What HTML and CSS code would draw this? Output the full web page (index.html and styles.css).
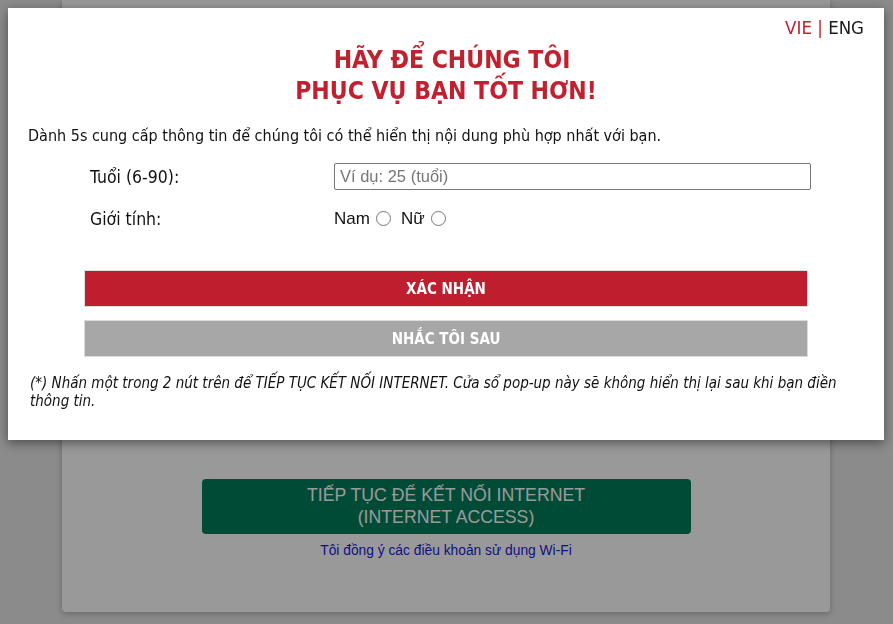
FILE: index.html
```html
<!DOCTYPE html>
<html lang="vi">
<head>
<meta charset="utf-8">
<title>Wi-Fi</title>
<link rel="stylesheet" href="styles.css">
</head>
<body>
<div class="page">
  <div class="card">
    <div class="card-space"></div>
    <a class="go-btn" href="#">TIẾP TỤC ĐỂ KẾT NỐI INTERNET<br>(INTERNET ACCESS)</a>
    <a class="terms" href="#">Tôi đồng ý các điều khoản sử dụng Wi-Fi</a>
  </div>
</div>
<div class="overlay"></div>
<div class="modal">
  <div class="lang"><span class="vie">VIE</span> <span class="sep">|</span> <span class="eng">ENG</span></div>
  <h1 class="title"><span class="t1">HÃY ĐỂ CHÚNG TÔI</span><br>PHỤC VỤ BẠN TỐT HƠN!</h1>
  <p class="intro">Dành 5s cung cấp thông tin để chúng tôi có thể hiển thị nội dung phù hợp nhất với bạn.</p>
  <div class="form">
    <label class="lbl" for="age">Tuổi (6-90):</label>
    <input class="age" id="age" type="text" placeholder="Ví dụ: 25 (tuổi)">
    <span class="lbl">Giới tính:</span>
    <div class="gender">
      <label class="opt">Nam <input type="radio" name="g"></label>
      <label class="opt">Nữ <input type="radio" name="g"></label>
    </div>
  </div>
  <div class="actions">
    <button class="btn btn-red">XÁC NHẬN</button>
    <button class="btn btn-gray">NHẮC TÔI SAU</button>
  </div>
  <p class="note">(*) Nhấn một trong 2 nút trên để TIẾP TỤC KẾT NỐI INTERNET. Cửa sổ pop-up này sẽ không hiển thị lại sau khi bạn điền thông tin.</p>
</div>
</body>
</html>
```
FILE: styles.css
```css
html, body {
  margin: 0;
  padding: 0;
  height: 100%;
  overflow: hidden;
}
body {
  background: #e8e8e8;
  font-family: "DejaVu Sans Condensed", "DejaVu Sans", sans-serif;
}
.page {
  display: flex;
  justify-content: center;
  padding-left: 62px;
  padding-right: 63px;
}
.card {
  flex: 1;
  background: #fff;
  border-radius: 0 0 4px 4px;
  box-shadow: 0 2px 6px rgba(0,0,0,0.25);
  display: flex;
  flex-direction: column;
  align-items: center;
  height: 612px;
  box-sizing: border-box;
}
.card-space {
  height: 479px;
}
.go-btn {
  display: block;
  width: 489px;
  height: 55px;
  box-sizing: border-box;
  background: #007d5a;
  border-radius: 4px;
  color: #fff;
  text-decoration: none;
  text-align: center;
  font-family: "Liberation Sans", Arial, sans-serif;
  font-size: 17.7px;
  line-height: 22px;
  padding-top: 5px;
}
.terms {
  margin-top: 9px;
  font-family: "Liberation Sans", Arial, sans-serif;
  font-size: 13.8px;
  color: #1a1ae0;
  text-decoration: none;
}
.overlay {
  position: fixed;
  inset: 0;
  background: rgba(0,0,0,0.4);
}
.modal {
  position: absolute;
  left: 8px;
  top: 8px;
  width: 876px;
  height: 432px;
  box-sizing: border-box;
  background: #fff;
  box-shadow: 0 3px 10px rgba(0,0,0,0.45);
  padding: 10px 20px 0 20px;
}
.lang {
  text-align: right;
  font-size: 18.5px;
  line-height: 20px;
  color: #222;
}
.vie, .sep { color: #c0202f; }
.eng { color: #1a1a1a; }
.title {
  margin: 6px 0 0 0;
  text-align: center;
  color: #c0202f;
  font-family: "DejaVu Sans Condensed", "DejaVu Sans", sans-serif;
  font-weight: bold;
  font-size: 24.5px;
  line-height: 31px;
}
.t1 {
  display: inline-block;
  padding-left: 12px;
}
.intro {
  margin: 20px 0 0 0;
  font-size: 16px;
  line-height: 20px;
  color: #111;
}
.form {
  display: grid;
  grid-template-columns: 244px 477px;
  row-gap: 19px;
  align-items: center;
  padding-left: 62px;
  margin-top: 17px;
}
.lbl {
  font-size: 17.5px;
  line-height: 20px;
  color: #111;
}
.age {
  height: 27px;
  box-sizing: border-box;
  border: 1px solid #767676;
  border-radius: 2px;
  padding: 0 5px;
  font-family: "Liberation Sans", Arial, sans-serif;
  font-size: 16.5px;
  margin: 0;
}
.age::placeholder { color: #757575; }
.gender {
  display: flex;
  gap: 10px;
  font-family: "Liberation Sans", Arial, sans-serif;
  font-size: 17px;
  line-height: 20px;
  color: #111;
}
.opt {
  display: flex;
  align-items: center;
  gap: 1px;
}
.opt input {
  margin: 0 0 2px 5px;
  width: 15px;
  height: 15px;
}
.actions {
  display: flex;
  flex-direction: column;
  gap: 13px;
  margin: 41px 56px 0 56px;
}
.btn {
  display: block;
  width: 100%;
  box-sizing: border-box;
  border: 1px solid #dcdcdc;
  color: #fff;
  font-family: "DejaVu Sans Condensed", "DejaVu Sans", sans-serif;
  font-weight: bold;
  font-size: 15px;
  cursor: pointer;
  padding: 0;
  margin: 0;
}
.btn-red { background: #bf1e2e; height: 37px; }
.btn-gray { background: #a6a7a6; height: 37px; }
.note {
  margin: 17px 0 0 2px;
  font-style: italic;
  font-size: 15px;
  line-height: 18px;
  color: #111;
}
```
